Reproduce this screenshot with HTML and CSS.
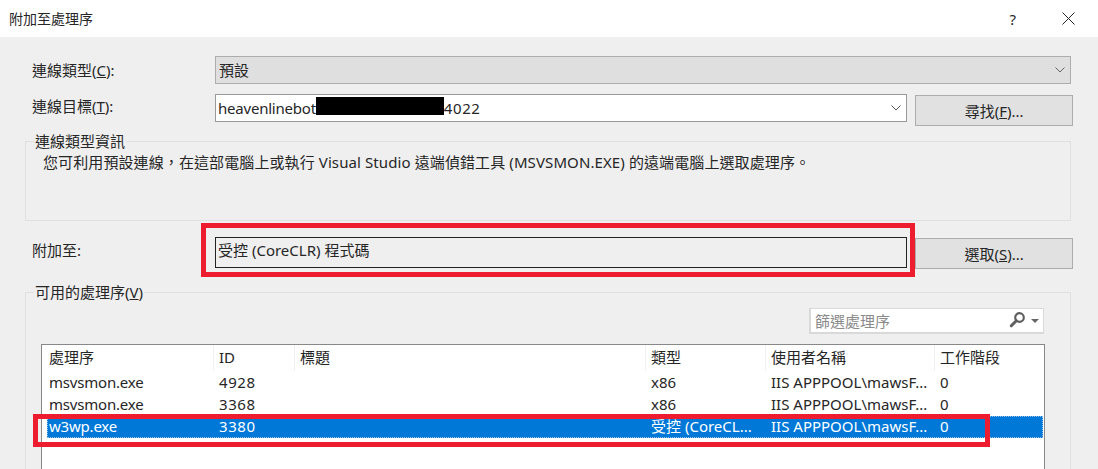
FILE: index.html
```html
<!DOCTYPE html>
<html lang="zh-Hant">
<head>
<meta charset="utf-8">
<title>附加至處理序</title>
<link rel="stylesheet" href="styles.css">
</head>
<body>
<header class="titlebar">
  <span class="title">附加至處理序</span>
  <span class="help">?</span>
  <svg class="close" width="13" height="13" viewBox="0 0 13 13"><path d="M.5.5l12 12M12.5.5l-12 12" stroke="#222" fill="none"/></svg>
</header>
<main class="body">
  <div class="row row-type">
    <label class="label">連線類型(<u>C</u>):</label>
    <div class="combo combo-disabled"><span>預設</span>
      <svg class="chev" width="10" height="6" viewBox="0 0 10 6"><path d="M.5.5L5 5 9.500.5" stroke="#666" fill="none"/></svg>
    </div>
  </div>
  <div class="row row-target">
    <label class="label">連線目標(<u>T</u>):</label>
    <div class="combo combo-target"><span class="host">heavenlinebot</span><span class="redact"></span><span class="num">4022</span>
      <svg class="chev" width="10" height="6" viewBox="0 0 10 6"><path d="M.5.5L5 5 9.500.5" stroke="#555" fill="none"/></svg>
    </div>
    <button class="btn">尋找(<u>F</u>)...</button>
  </div>
  <fieldset class="group group-info">
    <legend>連線類型資訊</legend>
    <p class="info">您可利用預設連線，在這部電腦上或執行 Visual Studio 遠端偵錯工具 (MSVSMON.EXE) 的遠端電腦上選取處理序。</p>
  </fieldset>
  <div class="row row-attach">
    <label class="label">附加至:</label>
    <div class="attach-box">受控 (CoreCLR) 程式碼</div>
    <button class="btn">選取(<u>S</u>)...</button>
    <div class="mark mark-attach"></div>
  </div>
  <fieldset class="group group-list">
    <legend>可用的處理序(<u>V</u>)</legend>
    <div class="filter">
      <span class="placeholder">篩選處理序</span>
      <svg class="lens" width="17" height="17" viewBox="0 0 17 17"><circle cx="10.500" cy="5.500" r="4.300" fill="none" stroke="#5f5f5f" stroke-width="2.200"/><path d="M7.300 8.800L2.300 13.800" stroke="#5f5f5f" stroke-width="3" stroke-linecap="round"/></svg>
      <span class="caret"></span>
    </div>
    <div class="list">
      <div class="tr th"><span>處理序</span><span>ID</span><span>標題</span><span>類型</span><span>使用者名稱</span><span>工作階段</span></div>
      <div class="tr"><span class="tight">msvsmon.exe</span><span class="num">4928</span><span></span><span>x86</span><span>IIS APPPOOL\mawsF...</span><span>0</span></div>
      <div class="tr"><span class="tight">msvsmon.exe</span><span class="num">3368</span><span></span><span>x86</span><span>IIS APPPOOL\mawsF...</span><span>0</span></div>
      <div class="tr selected"><span class="tight">w3wp.exe</span><span class="num">3380</span><span></span><span>受控 (CoreCL...</span><span>IIS APPPOOL\mawsF...</span><span>0</span></div>
      <div class="mark mark-row"></div>
    </div>
  </fieldset>
</main>
</body>
</html>
```
FILE: styles.css
```css
* { box-sizing: border-box; }
html, body { margin: 0; height: 469px; overflow: hidden; }
body {
  background: #efefef;
  color: #262626;
  font: 15px/20px "Noto Sans", "Noto Sans CJK TC", sans-serif;
}
u { text-decoration: underline; }
.tight { letter-spacing: -0.2px; }
.host { letter-spacing: -0.22px; }
.num { letter-spacing: 0.6px; }

.titlebar {
  height: 37px;
  background: #fff;
  display: flex;
  align-items: center;
  padding: 0 23px 0 9px;
}
.title { flex: 1; font-size: 14px; }
.help { margin-right: 46px; }

.body { padding: 19px 25px 0 25px; position: relative; height: 432px; overflow: hidden; }

.row { display: flex; align-items: flex-start; }
.label { width: 190px; flex: none; padding-left: 7px; }
.row-type { height: 38px; }
.row-type .label { padding-top: 4px; }
.row-target { height: 41px; }
.row-target .label { padding-top: 2px; }

.combo {
  display: flex;
  align-items: center;
  position: relative;
  height: 28px;
  padding-left: 3px;
}
.combo-disabled {
  width: 856px;
  background: #dfdfdf;
  border: 1px solid #adadad;
}
.combo-target {
  width: 693px;
  padding-left: 2px;
  background: #fff;
  border: 1px solid #999;
}
.redact { width: 128px; height: 18px; margin-top: -4px; background: #000; }
.chev { position: absolute; right: 5px; top: 10px; }

.btn {
  width: 158px;
  height: 31px;
  margin: 1px 0 0 8px;
  background: #e1e1e1;
  border: 1px solid #adadad;
  color: #262626;
  font: inherit;
  padding: 0;
}

.group {
  margin: 0;
  padding: 0;
  border: 1px solid #e0e0e0;
  min-width: 0;
}
.group legend { margin-left: 8px; padding: 0 1px; line-height: 18px; }
.group-info { width: 1046px; height: 89px; margin-top: -3px; }
.info { margin: 0; padding: 2px 0 0 17px; white-space: nowrap; line-height: 20px; letter-spacing: 0.1px; }

.row-attach { position: relative; height: 55px; margin-top: 2px; padding-top: 14px; }
.row-attach .label { padding-top: 3px; }
.attach-box {
  width: 693px;
  height: 31px;
  border: 1px solid #222;
  padding: 2px;
}

.mark { position: absolute; border: 5px solid #ed1c2e; pointer-events: none; }
.mark-attach { left: 176px; top: 0; width: 714px; height: 54px; }

.group-list { width: 1046px; height: 200px; margin-top: 5px; padding: 0 15px; }
.group-list legend { margin-left: -7px; }
.filter {
  position: relative;
  display: flex;
  align-items: center;
  width: 235px;
  height: 26px;
  margin: 7px 0 0 768px;
  background: #fff;
  border: 1px solid #d9d9d9;
  border-bottom-width: 2px;
  border-left-width: 2px;
  padding-left: 4px;
}
.placeholder { color: #8a8a8a; }
.lens { position: absolute; right: 17px; top: 3px; }
.caret {
  position: absolute; right: 4px; top: 10px;
  border: 4px solid transparent;
  border-top: 4px solid #666;
  border-bottom: 0;
}

.list {
  position: relative;
  width: 1004px;
  height: 130px;
  margin-top: 10px;
  background: #fff;
  border: 1px solid #888;
}
.tr {
  display: grid;
  grid-template-columns: 170px 81px 351px 120px 169px 1fr;
  height: 22px;
  line-height: 22px;
  padding-left: 1px;
  white-space: nowrap;
}
.tr span { padding-left: 6px; overflow: hidden; }
.th { height: 26px; line-height: 25px; }
.tr.th span { border-left: 1px solid #f0f0f0; padding-left: 5px; height: 26px; }
.tr.th span:first-child { border-left: 0; padding-left: 6px; }
.tr.selected {
  grid-template-columns: 166px 81px 351px 120px 169px 1fr;
  margin: 1px 1px 0 5px;
  padding-left: 0;
  line-height: 20px;
  background: #0078d7;
  color: #fff;
  outline: 1px dotted #8fc1ea;
  outline-offset: -1px;
}
.tr.selected span:first-child { padding-left: 2px; }
.mark-row { left: -9px; top: 69px; width: 957px; height: 33px; }
```
